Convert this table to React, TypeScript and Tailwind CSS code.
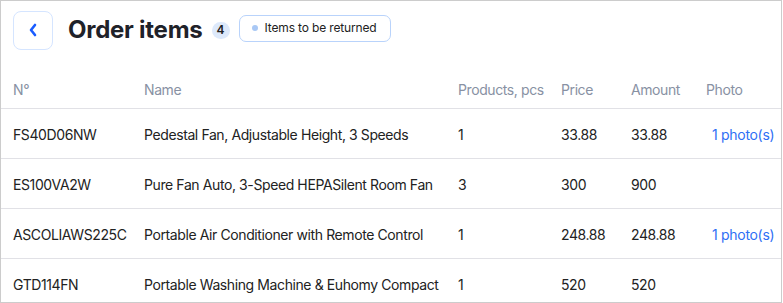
import React from "react";

const rows = [
  { no: "FS40D06NW", name: "Pedestal Fan, Adjustable Height, 3 Speeds", qty: "1", price: "33.88", amount: "33.88", photo: true },
  { no: "ES100VA2W", name: "Pure Fan Auto, 3-Speed HEPASilent Room Fan", qty: "3", price: "300", amount: "900", photo: false },
  { no: "ASCOLIAWS225C", name: "Portable Air Conditioner with Remote Control", qty: "1", price: "248.88", amount: "248.88", photo: true },
  { no: "GTD114FN", name: "Portable Washing Machine & Euhomy Compact", qty: "1", price: "520", amount: "520", photo: false },
];

const cols = "grid grid-cols-[131px_314px_103px_70px_75px_1fr] pl-[12px]";

export default function App() {
  return (
    <div className="w-[782px] h-[303px] border border-[#cccccc] bg-white overflow-hidden text-[#222222]" style={{ fontFamily: "Inter, 'Noto Sans', sans-serif" }}>
      <div className="flex items-center h-[58px] pl-[12px]">
        <button className="w-[40px] h-[39px] rounded-[8px] border border-[#d5e5ff] flex items-center justify-center">
          <svg width="10" height="14" viewBox="0 0 10 14">
            <path d="M7 2 L3 7 L7 12" fill="none" stroke="#1a5cff" strokeWidth="2.6" strokeLinecap="round" strokeLinejoin="round" />
          </svg>
        </button>
        <h1 className="ml-[15px] text-[24px] font-bold tracking-[-0.25px] text-[#1f2229] leading-none">Order items</h1>
        <span className="ml-[9px] w-[18px] h-[17px] rounded-full bg-[#dde9fb] text-[12px] font-semibold flex items-center justify-center text-[#222]">4</span>
        <span className="ml-[9px] -mt-[4px] h-[27px] pl-[12px] pr-[13px] rounded-[7px] border border-[#b9d3fb] flex items-center gap-[7px] text-[12px] tracking-[-0.15px] text-[#222]">
          <span className="w-[6px] h-[6px] rounded-full bg-[#a9c8f5]" />
          Items to be returned
        </span>
      </div>
      <div className="h-[11px]" />
      <div className={`${cols} h-[39px] items-center border-b border-[#e1e1e6] text-[14px] tracking-[-0.4px] text-[#8891a3]`}>
        <div>N°</div>
        <div>Name</div>
        <div>Products, pcs</div>
        <div>Price</div>
        <div>Amount</div>
        <div>Photo</div>
      </div>
      {rows.map((r, i) => (
        <div key={r.no} className={`${cols} h-[50px] items-center text-[14px] tracking-[-0.4px] ${i < rows.length - 1 ? "border-b border-[#e1e1e6]" : ""}`}>
          <div className="pt-[1px]">{r.no}</div>
          <div className="pt-[1px] whitespace-nowrap">{r.name}</div>
          <div className="pt-[1px]">{r.qty}</div>
          <div className="pt-[1px]">{r.price}</div>
          <div className="pt-[1px]">{r.amount}</div>
          <div className="pt-[1px] pl-[6px]">{r.photo ? <span className="text-[#2f6ff5] text-[14px] tracking-[-0.3px]">1 photo(s)</span> : null}</div>
        </div>
      ))}
    </div>
  );
}
